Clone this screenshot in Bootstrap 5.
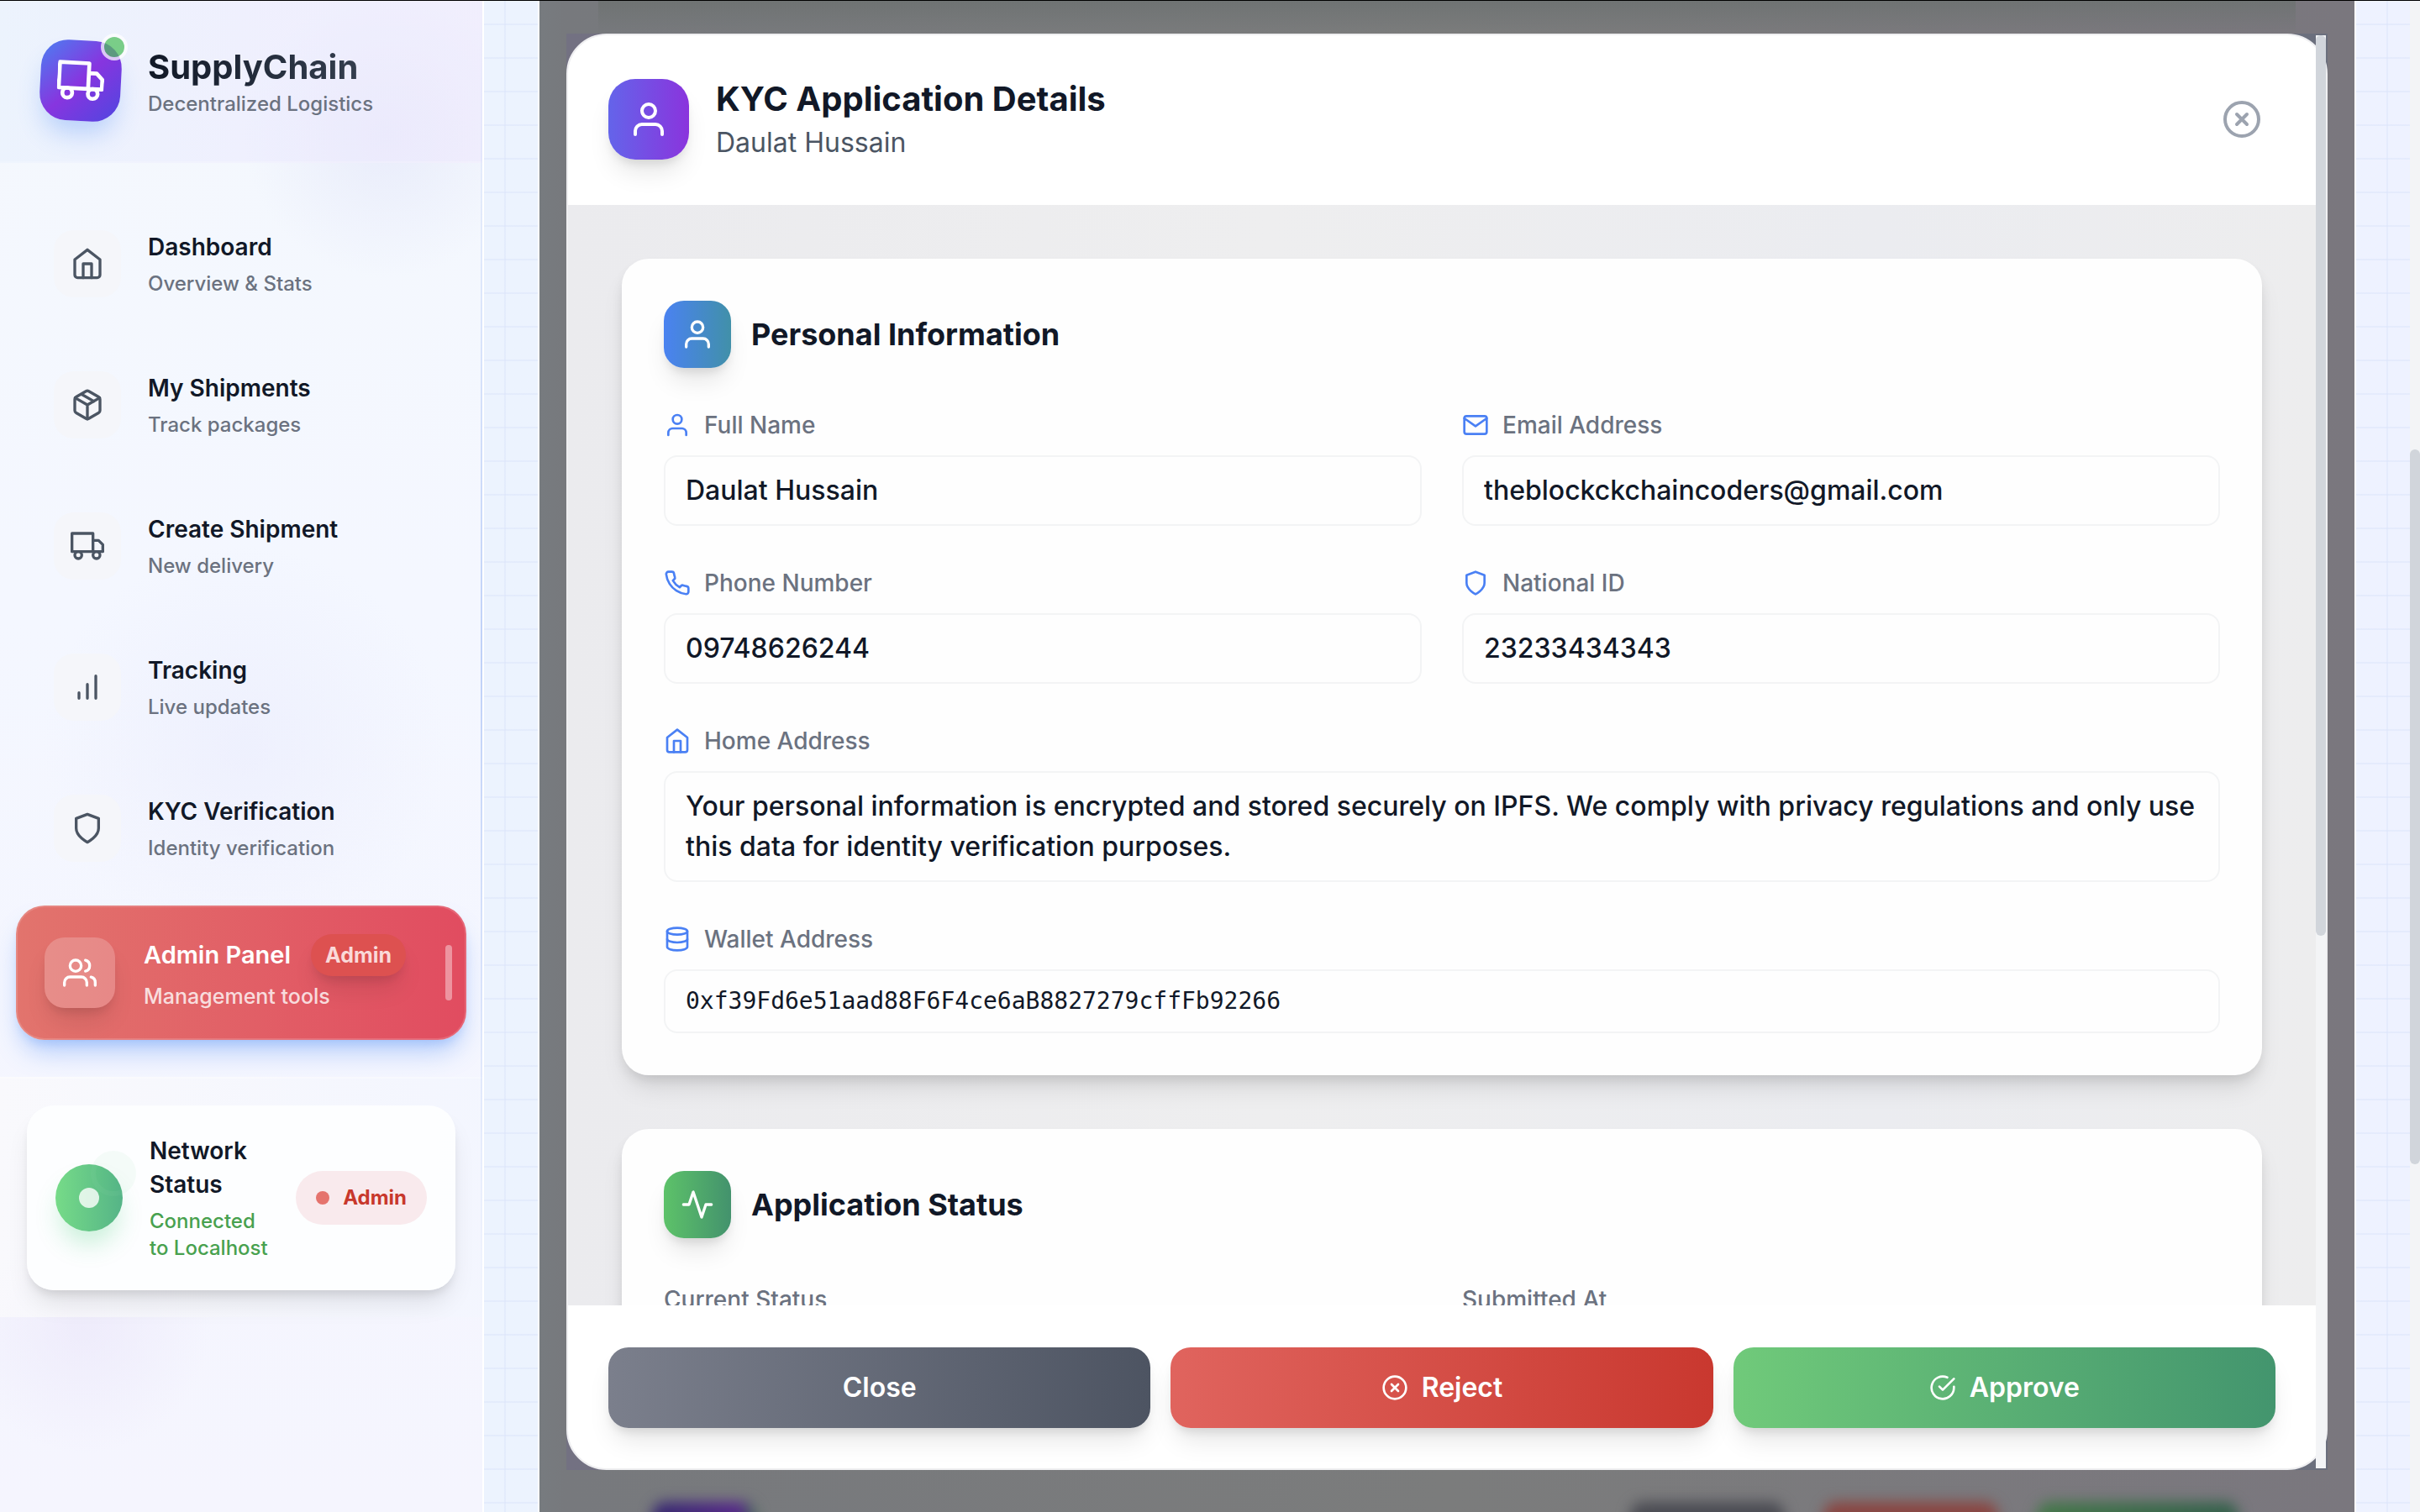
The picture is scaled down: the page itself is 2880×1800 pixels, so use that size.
<!DOCTYPE html>
<html lang="en">
<head>
<meta charset="utf-8">
<meta name="viewport" content="width=device-width, initial-scale=1">
<title>SupplyChain – KYC Application Details</title>
<link href="https://cdn.jsdelivr.net/npm/bootstrap@5.3.0/dist/css/bootstrap.min.css" rel="stylesheet">
<style>
  :root { --ink: #111827; --muted: #6b7280; --soft-shadow: 0 20px 30px -6px rgba(0,0,0,.1), 0 8px 12px -4px rgba(0,0,0,.1); }
  body { font-family: Inter, "Liberation Sans", sans-serif; font-size: 32px; line-height: 48px; color: var(--ink); background: #fff; }
  body::before { content: ""; position: fixed; inset: 0 0 auto 0; height: 1px; background: #000; z-index: 50; }
  svg { fill: none; stroke: currentColor; stroke-width: 2; stroke-linecap: round; stroke-linejoin: round; flex: none; display: block; }
  .ic-32 { width: 32px; height: 32px; }
  .ic-40 { width: 40px; height: 40px; }
  .ic-48 { width: 48px; height: 48px; }
  .ic-56 { width: 56px; height: 56px; }
  .gap-16 { gap: 16px; } .gap-24 { gap: 24px; } .gap-32 { gap: 32px; }

  /* sidebar */
  .side { flex: 0 0 576px; border-right: 2px solid #fff;
    background:
      radial-gradient(circle at 460px 160px, rgba(215,218,246,.4), transparent 170px),
      radial-gradient(circle at 290px 890px, rgba(232,234,252,.5), transparent 240px),
      radial-gradient(circle at 100px 1580px, rgba(232,226,248,.5), transparent 150px),
      linear-gradient(180deg, #f4f8fd, #f4f7ff 40%, #f5f5fe); }
  .side::after { content: ""; position: absolute; top: 0; right: 0; width: 2px; height: 1568px;
    background: linear-gradient(180deg, transparent, #bfd1f8 50%, transparent); }
  .brand-bar { padding: 48px; border-bottom: 2px solid rgba(255,255,255,.2); background: linear-gradient(90deg, rgba(230,240,253,.6), rgba(236,234,254,.6) 60%, rgba(238,232,253,.6)); }
  .brand-logo { width: 96px; height: 96px; }
  .brand-tile { width: 96px; height: 96px; border-radius: 32px; transform: rotate(3deg); color: #fff;
    background: linear-gradient(135deg, #4a80f2, #8735df 50%, #4f46e0); box-shadow: 0 20px 30px -6px rgba(59,130,246,.3); }
  .brand-dot { position: absolute; top: -8px; right: -8px; width: 32px; height: 32px; border-radius: 50%;
    background: #4ec05c; border: 4px solid #fff; opacity: .72; }
  .brand-name { font-size: 40px; line-height: 56px; font-weight: 700; background: linear-gradient(90deg, #111827, #374151); -webkit-background-clip: text; background-clip: text; color: transparent; }
  .sub-24 { font-size: 24px; line-height: 32px; font-weight: 500; color: var(--muted); }
  .ttl-28 { font-size: 28px; line-height: 40px; font-weight: 600; color: var(--ink); }
  .side-nav { padding: 48px 32px; gap: 24px; overflow: hidden; }
  .side-link { padding: 32px; color: inherit; text-decoration: none; }
  .side-link .words { display: grid; gap: 8px; }
  .side-tile { width: 80px; height: 80px; border-radius: 24px; background: #f5f6fa; color: #4b5563; }
  .side-link.current { margin: -4px -13px; padding: 32px 15px 32px 32px; gap: 34px; height: 160px; border-radius: 34px; border: 2px solid rgba(255,255,255,.15); background: linear-gradient(90deg, #e2746d, #e14c60) border-box; color: #fff; box-shadow: 0 20px 30px -6px rgba(59,130,246,.35), 0 8px 12px -4px rgba(59,130,246,.2); }
  .current .side-tile { width: 84px; height: 84px; background: rgba(255,255,255,.2); color: #fff; box-shadow: var(--soft-shadow); }
  .current .words { gap: 6px; white-space: nowrap; }
  .current .ttl { font-size: 29px; line-height: 50px; font-weight: 600; }
  .current .sub { font-size: 25px; line-height: 36px; font-weight: 500; color: rgba(255,255,255,.8); }
  .role-tag { font-size: 25px; line-height: 34px; font-weight: 700; padding: 8px 17px; border-radius: 25px; background: #dd5150; color: #fad9d9; box-shadow: var(--soft-shadow); }
  .current-bar { width: 8px; height: 66px; border-radius: 4px; background: rgba(255,255,255,.4); }
  .net-zone { padding: 32px; border-top: 2px solid rgba(255,255,255,.3); background: linear-gradient(90deg, rgba(250,250,252,.8), rgba(243,246,254,.8)); }
  .net-card { padding: 34px; border-radius: 32px; background: rgba(253,254,255,.92); box-shadow: var(--soft-shadow); }
  .net-orb { width: 80px; height: 80px; border-radius: 50%; background: linear-gradient(90deg, #76db88, #55b487); box-shadow: 0 20px 30px -6px rgba(34,197,94,.25); }
  .net-core { width: 24px; height: 24px; border-radius: 50%; background: rgba(255,255,255,.8); }
  .net-ping { position: absolute; top: -16px; right: -16px; width: 54px; height: 54px; border-radius: 50%; background: rgba(74,190,120,.05); border: 6px solid rgba(255,255,255,.04); }
  .net-role { padding: 16px 24px; border-radius: 32px; background: #f9eaed; font-size: 24px; line-height: 32px; font-weight: 700; color: #c8382c; }
  .net-role i { width: 16px; height: 16px; border-radius: 50%; background: #e5736d; }
  .txt-green { color: #48a14f; }

  /* page area behind the dialog */
  .stage { padding: 0 64px; min-width: 0;
    background:
      repeating-linear-gradient(90deg, transparent 0 24px, rgba(219,228,250,.5) 24px 26px, transparent 26px 40px),
      repeating-linear-gradient(180deg, transparent 0 28px, rgba(219,228,250,.5) 28px 30px, transparent 30px 40px),
      linear-gradient(90deg, #ecf3fe, #eef2ff); }
  .panel { border: solid #fff; border-width: 0 2px; background: linear-gradient(90deg, #777b7f 0, #77797d 30px, #7b7c7c 50%, #7a777e); }
  .panel-top { height: 40px; background: linear-gradient(180deg, #6f7373, rgba(119,123,123,0)); margin: 0 70px; }
  .ghosts { padding: 0 138px 0 134px; height: 12px; gap: 46px; }
  .ghosts b { height: 40px; filter: blur(8px); border-radius: 16px; }
  .g1 { width: 124px; background: linear-gradient(90deg, #35286f, #56278a 85%, #3f7a4c); }
  .g2 { width: 184px; background: #4b4c53; } .g3 { width: 208px; background: #8a4541; } .g4 { width: 240px; background: linear-gradient(90deg, #45784a, #35604c); }
  .veil { position: absolute; inset: 0; padding: 40px 32px 0; }

  /* dialog */
  .dlg { height: 95vh; background: linear-gradient(90deg, #737182, #6b6f7d); }
  .dlg-shell { height: 100%; padding-right: 12px; border: 2px solid #efeff1; border-radius: 48px; overflow: hidden; background: #ececee; }
  .dlg-head { padding: 48px; border-bottom: 2px solid #fff; background: #fff; }
  .dlg-tile { width: 96px; height: 96px; border-radius: 32px; color: #fff; background: linear-gradient(90deg, #6464ea, #8a34dd); box-shadow: var(--soft-shadow); }
  .dlg-head h1 { font-size: 40px; line-height: 56px; font-weight: 700; }
  .dlg-head p { font-weight: 400; color: #4b5563; }
  .close-x { padding: 16px; border: 0; background: none; color: #9ca3af; }
  .dlg-scroll { padding: 64px; gap: 64px; overflow: hidden; min-height: 0; background: linear-gradient(90deg, #ebebee, #eeeeef 40%, #ebecf0 75%, #ededee); }
  .info-box { flex: none; padding: 50px; border-radius: 32px; background: #fefefe; box-shadow: 0 20px 30px -6px rgba(0,0,0,.1), 0 8px 16px -4px rgba(0,0,0,.12); }
  .info-head { margin-bottom: 48px; }
  .info-head h2 { font-size: 36px; line-height: 56px; font-weight: 700; }
  .info-tile { width: 80px; height: 80px; border-radius: 24px; color: #fff; box-shadow: var(--soft-shadow); }
  .tile-blue { background: linear-gradient(90deg, #4a82f1, #4190a9); }
  .tile-green { background: linear-gradient(90deg, #5dc269, #43926d); }
  .info-grid { --bs-gutter-x: 48px; --bs-gutter-y: 48px; }
  .lbl { font-size: 28px; line-height: 40px; font-weight: 500; color: var(--muted); gap: 16px; margin-bottom: 16px; }
  .lbl svg { color: #4a80f4; }
  .val { display: block; font-size: 32px; line-height: 48px; font-weight: 500; color: var(--ink); background: #fefefe; border: 2px solid #f3f4f5; border-radius: 16px; padding: 16px 24px; resize: none; overflow: hidden; }
  input.val { height: 84px; padding: 15px 24px 17px; } textarea.val { height: 132px; }
  input.val-mono { height: 76px; font-family: "DejaVu Sans Mono", monospace; font-size: 28px; line-height: 40px; font-weight: 400; }
  .plain-lbl { font-size: 28px; font-weight: 500; color: var(--muted); }
  .dlg-foot { padding: 48px; border-top: 2px solid #fff; background: #fff; gap: 24px; }
  .act { flex: 1 1 0; height: 96px; border: 0; border-radius: 24px; color: #fff; font-size: 32px; line-height: 48px; font-weight: 600; box-shadow: var(--soft-shadow); }
  .act-close { background: linear-gradient(90deg, #7b7f8c, #4d5462); }
  .act-reject { background: linear-gradient(90deg, #e0645e, #c9382f); }
  .act-approve { background: linear-gradient(90deg, #70ca7a, #43956e); }
  .rail { width: 12px; background: #f3f4f6; }
  .rail-thumb { border-radius: 6px; background: #d1d5db; }
  .dlg-rail { position: absolute; inset: 2px 2px 2px auto; }
  .dlg-rail .rail-thumb { height: 1072px; }
  .page-rail { flex: none; padding-top: 535px; }
  .page-rail .rail-thumb { height: 851px; }
</style>
<script src="https://cdn.jsdelivr.net/npm/bootstrap@5.3.0/dist/js/bootstrap.bundle.min.js"></script>
</head>
<body class="vh-100 overflow-hidden d-flex">
<svg class="d-none" aria-hidden="true">
  <symbol id="home" viewBox="0 0 24 24"><path d="M3 9l9-7 9 7v11a2 2 0 0 1-2 2H5a2 2 0 0 1-2-2z"/><path d="M9 22V12h6v10"/></symbol>
  <symbol id="package" viewBox="0 0 24 24"><path d="M16.5 9.4l-9-5.19M21 16V8a2 2 0 0 0-1-1.73l-7-4a2 2 0 0 0-2 0l-7 4A2 2 0 0 0 3 8v8a2 2 0 0 0 1 1.73l7 4a2 2 0 0 0 2 0l7-4A2 2 0 0 0 21 16z"/><path d="M3.27 6.96L12 12.01l8.73-5.05M12 22.08V12"/></symbol>
  <symbol id="truck" viewBox="0 0 24 24"><path d="M1 3h15v13H1zM16 8h4l3 3v5h-7z"/><circle cx="5.5" cy="18.5" r="2.5"/><circle cx="18.5" cy="18.5" r="2.5"/></symbol>
  <symbol id="bars" viewBox="0 0 24 24"><path d="M12 20V10M18 20V4M6 20v-4"/></symbol>
  <symbol id="shield" viewBox="0 0 24 24"><path d="M12 22s8-4 8-10V5l-8-3-8 3v7c0 6 8 10 8 10z"/></symbol>
  <symbol id="users" viewBox="0 0 24 24"><path d="M17 21v-2a4 4 0 0 0-4-4H5a4 4 0 0 0-4 4v2"/><circle cx="9" cy="7" r="4"/><path d="M23 21v-2a4 4 0 0 0-3-3.87M16 3.13a4 4 0 0 1 0 7.75"/></symbol>
  <symbol id="user" viewBox="0 0 24 24"><path d="M20 21v-2a4 4 0 0 0-4-4H8a4 4 0 0 0-4 4v2"/><circle cx="12" cy="7" r="4"/></symbol>
  <symbol id="mail" viewBox="0 0 24 24"><path d="M4 4h16c1.1 0 2 .9 2 2v12c0 1.1-.9 2-2 2H4c-1.100 0-2-.9-2-2V6c0-1.100.9-2 2-2z"/><path d="M22 6l-10 7L2 6"/></symbol>
  <symbol id="phone" viewBox="0 0 24 24"><path d="M22 16.92v3a2 2 0 0 1-2.180 2 19.790 19.790 0 0 1-8.630-3.070 19.500 19.500 0 0 1-6-6 19.790 19.790 0 0 1-3.070-8.670A2 2 0 0 1 4.110 2h3a2 2 0 0 1 2 1.720 12.840 12.840 0 0 0 .7 2.810 2 2 0 0 1-.45 2.110L8.090 9.910a16 16 0 0 0 6 6l1.270-1.270a2 2 0 0 1 2.110-.45 12.840 12.840 0 0 0 2.810.7A2 2 0 0 1 22 16.920z"/></symbol>
  <symbol id="database" viewBox="0 0 24 24"><ellipse cx="12" cy="5" rx="9" ry="3"/><path d="M21 12c0 1.660-4 3-9 3s-9-1.340-9-3"/><path d="M3 5v14c0 1.660 4 3 9 3s9-1.340 9-3V5"/></symbol>
  <symbol id="pulse" viewBox="0 0 24 24"><path d="M22 12h-4l-3 9L9 3l-3 9H2"/></symbol>
  <symbol id="xcircle" viewBox="0 0 24 24"><circle cx="12" cy="12" r="10"/><path d="M15 9l-6 6M9 9l6 6"/></symbol>
  <symbol id="check" viewBox="0 0 24 24"><path d="M22 11.080V12a10 10 0 1 1-5.930-9.140"/><path d="M22 4L12 14.010l-3-3"/></symbol>
</svg>

<aside class="side position-relative d-flex flex-column">
  <div class="brand-bar d-flex align-items-center gap-32">
    <div class="brand-logo position-relative">
      <div class="brand-tile d-flex align-items-center justify-content-center"><svg class="ic-56"><use href="#truck"/></svg></div>
      <span class="brand-dot"></span>
    </div>
    <div>
      <div class="brand-name">SupplyChain</div>
      <div class="sub-24">Decentralized Logistics</div>
    </div>
  </div>

  <nav class="side-nav d-flex flex-column">
    <a href="#" class="side-link d-flex align-items-center gap-32"><span class="side-tile d-flex align-items-center justify-content-center"><svg class="ic-40"><use href="#home"/></svg></span><span class="words"><span class="ttl-28">Dashboard</span><span class="sub-24">Overview &amp; Stats</span></span></a>
    <a href="#" class="side-link d-flex align-items-center gap-32"><span class="side-tile d-flex align-items-center justify-content-center"><svg class="ic-40"><use href="#package"/></svg></span><span class="words"><span class="ttl-28">My Shipments</span><span class="sub-24">Track packages</span></span></a>
    <a href="#" class="side-link d-flex align-items-center gap-32"><span class="side-tile d-flex align-items-center justify-content-center"><svg class="ic-40"><use href="#truck"/></svg></span><span class="words"><span class="ttl-28">Create Shipment</span><span class="sub-24">New delivery</span></span></a>
    <a href="#" class="side-link d-flex align-items-center gap-32"><span class="side-tile d-flex align-items-center justify-content-center"><svg class="ic-40"><use href="#bars"/></svg></span><span class="words"><span class="ttl-28">Tracking</span><span class="sub-24">Live updates</span></span></a>
    <a href="#" class="side-link d-flex align-items-center gap-32"><span class="side-tile d-flex align-items-center justify-content-center"><svg class="ic-40"><use href="#shield"/></svg></span><span class="words"><span class="ttl-28">KYC Verification</span><span class="sub-24">Identity verification</span></span></a>
    <a href="#" class="side-link current d-flex align-items-center" aria-current="page">
      <span class="side-tile d-flex align-items-center justify-content-center"><svg class="ic-40"><use href="#users"/></svg></span>
      <span class="words">
        <span class="d-flex align-items-center gap-24"><span class="ttl">Admin Panel</span><span class="role-tag">Admin</span></span>
        <span class="sub">Management tools</span>
      </span>
      <span class="current-bar ms-auto"></span>
    </a>
  </nav>

  <div class="net-zone">
    <div class="net-card d-flex align-items-center gap-32">
      <div class="net-orb position-relative d-flex align-items-center justify-content-center flex-shrink-0"><span class="net-core"></span><span class="net-ping"></span></div>
      <div class="text-nowrap d-grid gap-2">
        <div class="ttl-28">Network<br>Status</div>
        <div class="sub-24 txt-green">Connected<br>to Localhost</div>
      </div>
      <div class="net-role d-flex align-items-center gap-16 ms-auto"><i></i>Admin</div>
    </div>
  </div>
</aside>

<main class="stage flex-grow-1">
  <div class="panel h-100 position-relative overflow-hidden d-flex flex-column justify-content-between">
    <div class="panel-top"></div>
    <div class="ghosts d-flex"><b class="g1 me-auto"></b><b class="g2"></b><b class="g3"></b><b class="g4"></b></div>

    <div class="veil">
      <section class="dlg position-relative" role="dialog" aria-labelledby="dlg-title">
        <div class="dlg-shell d-flex flex-column">
          <header class="dlg-head d-flex align-items-center gap-32">
            <div class="dlg-tile d-flex align-items-center justify-content-center"><svg class="ic-48"><use href="#user"/></svg></div>
            <div>
              <h1 id="dlg-title" class="m-0">KYC Application Details</h1>
              <p class="m-0">Daulat Hussain</p>
            </div>
            <button type="button" class="close-x ms-auto" aria-label="Close dialog"><svg class="ic-48"><use href="#xcircle"/></svg></button>
          </header>

          <div class="dlg-scroll flex-grow-1 d-flex flex-column">
            <div class="info-box">
              <div class="info-head d-flex align-items-center gap-24">
                <div class="info-tile tile-blue d-flex align-items-center justify-content-center"><svg class="ic-40"><use href="#user"/></svg></div>
                <h2 class="m-0">Personal Information</h2>
              </div>
              <div class="row info-grid">
                <div class="col-6"><label class="lbl d-flex align-items-center" for="f-name"><svg class="ic-32"><use href="#user"/></svg>Full Name</label><input id="f-name" class="val w-100" type="text" readonly value="Daulat Hussain"></div>
                <div class="col-6"><label class="lbl d-flex align-items-center" for="f-mail"><svg class="ic-32"><use href="#mail"/></svg>Email Address</label><input id="f-mail" class="val w-100" type="text" readonly value="theblockckchaincoders@gmail.com"></div>
                <div class="col-6"><label class="lbl d-flex align-items-center" for="f-phone"><svg class="ic-32"><use href="#phone"/></svg>Phone Number</label><input id="f-phone" class="val w-100" type="text" readonly value="09748626244"></div>
                <div class="col-6"><label class="lbl d-flex align-items-center" for="f-nid"><svg class="ic-32"><use href="#shield"/></svg>National ID</label><input id="f-nid" class="val w-100" type="text" readonly value="23233434343"></div>
                <div class="col-12"><label class="lbl d-flex align-items-center" for="f-home"><svg class="ic-32"><use href="#home"/></svg>Home Address</label><textarea id="f-home" class="val w-100" rows="2" readonly>Your personal information is encrypted and stored securely on IPFS. We comply with privacy regulations and only use this data for identity verification purposes.</textarea></div>
                <div class="col-12"><label class="lbl d-flex align-items-center" for="f-wallet"><svg class="ic-32"><use href="#database"/></svg>Wallet Address</label><input id="f-wallet" class="val val-mono w-100" type="text" readonly value="0xf39Fd6e51aad88F6F4ce6aB8827279cffFb92266"></div>
              </div>
            </div>

            <div class="info-box">
              <div class="info-head d-flex align-items-center gap-24">
                <div class="info-tile tile-green d-flex align-items-center justify-content-center"><svg class="ic-40"><use href="#pulse"/></svg></div>
                <h2 class="m-0">Application Status</h2>
              </div>
              <div class="row info-grid">
                <div class="col-6"><span class="plain-lbl">Current Status</span></div>
                <div class="col-6"><span class="plain-lbl">Submitted At</span></div>
              </div>
            </div>
          </div>

          <footer class="dlg-foot d-flex">
            <button type="button" class="act act-close d-flex align-items-center justify-content-center">Close</button>
            <button type="button" class="act act-reject d-flex align-items-center justify-content-center gap-16"><svg class="ic-32"><use href="#xcircle"/></svg>Reject</button>
            <button type="button" class="act act-approve d-flex align-items-center justify-content-center gap-16"><svg class="ic-32"><use href="#check"/></svg>Approve</button>
          </footer>
        </div>
        <div class="rail dlg-rail"><div class="rail-thumb"></div></div>
      </section>
    </div>
  </div>
</main>
<div class="rail page-rail"><div class="rail-thumb"></div></div>
</body>
</html>
